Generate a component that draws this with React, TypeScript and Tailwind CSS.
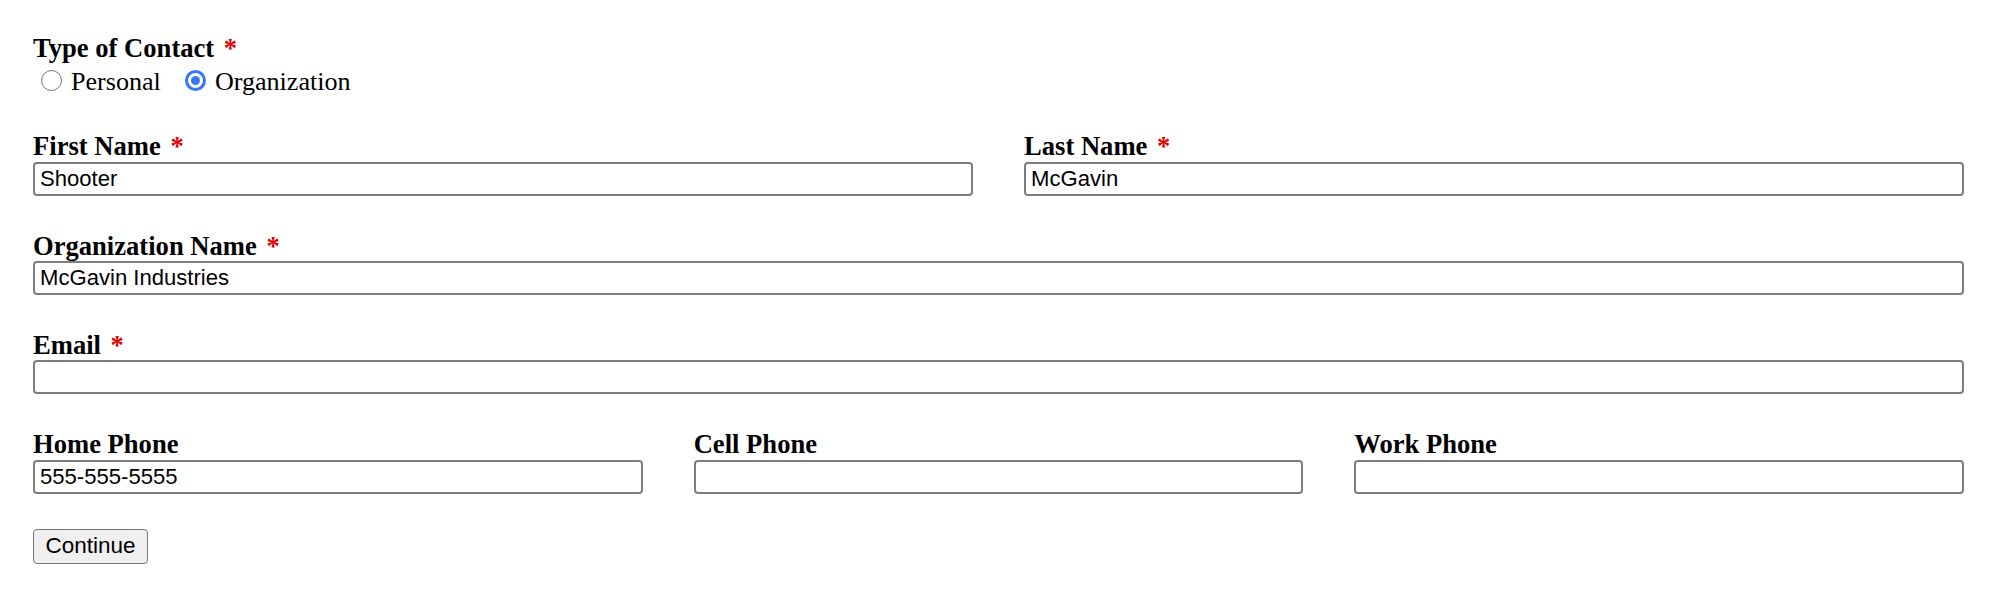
import React from "react";

function Label({ text, required }: { text: string; required?: boolean }) {
  return (
    <div className="h-[29.4px] leading-[29.4px] text-[26.6px] font-bold text-black whitespace-nowrap">
      {text}
      {required && <span className="ml-[3px] text-[#e00000]"> *</span>}
    </div>
  );
}

function Field({ label, required, value }: { label: string; required?: boolean; value?: string }) {
  return (
    <div className="flex flex-col">
      <Label text={label} required={required} />
      <input
        defaultValue={value ?? ""}
        className="h-[34px] w-full rounded-[4px] border-[2px] border-[#7d7d7d] bg-white px-[5px] font-['Liberation_Sans',Arial,sans-serif] text-[22.1px] text-black outline-none"
      />
    </div>
  );
}

function Radio({ checked }: { checked?: boolean }) {
  if (checked) {
    return (
      <span className="flex h-[21px] w-[21px] shrink-0 items-center justify-center rounded-full border-[3px] border-[#3478f6] bg-white">
        <span className="h-[9px] w-[9px] rounded-full bg-[#3478f6]" />
      </span>
    );
  }
  return <span className="block h-[21px] w-[21px] shrink-0 rounded-full border-[1.5px] border-[#767676] bg-white" />;
}

export default function App() {
  return (
    <div className="min-h-[604px] w-full bg-white pl-[33px] pr-[36px] pt-[34px] font-['Liberation_Serif','Times_New_Roman',serif] text-black">
      <div className="flex flex-col gap-[36px]">
        <div className="flex flex-col">
          <Label text="Type of Contact" required />
          <div className="flex h-[32.9px] items-start">
            <span className="ml-[8px] mt-[6.5px]">
              <Radio />
            </span>
            <span className="ml-[9px] mt-[3.5px] text-[26.1px] leading-[29.4px]">Personal</span>
            <span className="ml-[24px] mt-[6.5px]">
              <Radio checked />
            </span>
            <span className="ml-[9px] mt-[3.5px] text-[26.1px] leading-[29.4px]">Organization</span>
          </div>
        </div>

        <div className="grid grid-cols-2 gap-x-[51px]">
          <Field label="First Name" required value="Shooter" />
          <Field label="Last Name" required value="McGavin" />
        </div>

        <Field label="Organization Name" required value="McGavin Industries" />

        <Field label="Email" required />

        <div className="grid grid-cols-3 gap-x-[51px]">
          <Field label="Home Phone" value="555-555-5555" />
          <Field label="Cell Phone" />
          <Field label="Work Phone" />
        </div>
      </div>

      <button
        type="button"
        className="mt-[35px] flex h-[35px] w-[115px] items-center justify-center rounded-[4px] border-[1.5px] border-[#767676] bg-[#efefef] font-['Liberation_Sans',Arial,sans-serif] text-[22.5px] text-black"
      >
        Continue
      </button>
    </div>
  );
}
